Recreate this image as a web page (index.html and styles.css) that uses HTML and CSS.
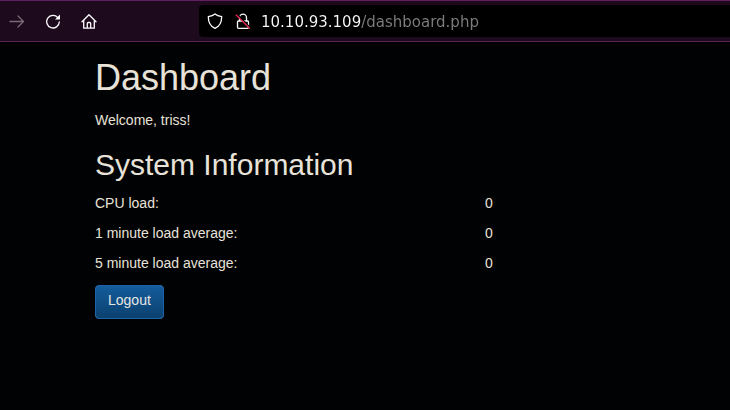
FILE: index.html
```html
<!DOCTYPE html>
<html lang="en">

<head>
    <meta charset="UTF-8">
    <meta name="viewport" content="width=device-width, initial-scale=1.0">
    <title>Dashboard</title>
    <link rel="stylesheet" href="styles.css">
</head>

<body>
    <!-- browser toolbar -->
    <header class="toolbar">
        <button type="button" class="tool forward" aria-label="Forward" disabled>
            <svg width="16" height="16" viewBox="0 0 16 16"><path d="M1 8.5h13.500M9 3l5.500 5.500L9 14"/></svg>
        </button>
        <button type="button" class="tool" aria-label="Reload">
            <svg width="16" height="16" viewBox="0 0 16 16"><path d="M12.800 4.600A6.300 6.300 0 1 0 14.300 9"/><path class="solid" d="M15 1.500v5H10z"/></svg>
        </button>
        <button type="button" class="tool" aria-label="Home">
            <svg width="16" height="16" viewBox="0 0 16 16"><path d="M1 8.800L8 1.700l7 7.100M2.700 7.300v7.900h10.600V7.300M6.300 15v-4.500q0-1 1-1h1.400q1 0 1 1V15"/></svg>
        </button>
        <div class="urlbar">
            <svg width="16" height="16" viewBox="0 0 16 16"><path d="M8 1C6.300 2.400 4 3.200 1.300 3.700c0 5.300 1.400 9.300 6.700 11.600 5.300-2.300 6.700-6.300 6.700-11.600C12 3.200 9.700 2.400 8 1z"/></svg>
            <svg width="16" height="16" viewBox="0 0 16 16"><path d="M4.500 8V4.700a3.500 3.500 0 0 1 7 0V8M3.500 8h9q1 0 1 1v5.300q0 1-1 1h-9q-1 0-1-1V9q0-1 1-1z"/><path class="gap" d="M2.500 1.800l13 13"/><path class="slash" d="M1.200 2l13.300 13.300"/></svg>
            <input type="text" class="url" aria-label="Address" value="10.10.93.109/dashboard.php">
        </div>
    </header>

    <!-- page -->
    <main class="container">
        <h1>Dashboard</h1>
        <p>Welcome, triss!</p>
        <h2>System Information</h2>
        <dl class="stats">
            <dt>CPU load:</dt>
            <dd>0</dd>
            <dt>1 minute load average:</dt>
            <dd>0</dd>
            <dt>5 minute load average:</dt>
            <dd>0</dd>
        </dl>
        <button type="button" class="btn">Logout</button>
    </main>
</body>

</html>
```
FILE: styles.css
```css
* {
    box-sizing: border-box;
}

body {
    margin: 0;
    background-color: #010204;
    color: #e8e3d9;
    font-family: "Liberation Sans", Arial, sans-serif;
    font-size: 14px;
    line-height: 20px;
}

/* toolbar */
.toolbar {
    display: flex;
    align-items: center;
    gap: 20px;
    padding: 4px 0 4px 9px;
    border-top: 1px solid #632060;
    border-bottom: 1px solid #5a2358;
    background-color: #1e0a1d;
}

.tool {
    display: flex;
    padding: 0;
    border: none;
    background: none;
    color: #fbfbfe;
}

.forward {
    color: #786a78;
}

svg {
    flex: none;
    fill: none;
    stroke: currentColor;
    stroke-width: 1.3;
    stroke-linejoin: round;
    stroke-linecap: round;
}

.solid {
    fill: currentColor;
    stroke: none;
}

.gap {
    stroke: #000;
}

.slash {
    stroke: #e22850;
}

.urlbar {
    display: flex;
    flex: 1;
    align-items: center;
    gap: 12px;
    height: 32px;
    margin-left: 82px;
    padding-left: 8px;
    border-radius: 4px 0 0 4px;
    background-color: #000;
    color: #fbfbfe;
}

/* host is bright, path is dimmed */
.url {
    flex: 1;
    min-width: 0;
    height: 24px;
    margin-left: -2px;
    padding: 2px 0 0;
    border: none;
    outline: none;
    background: linear-gradient(to right, #fbfbfe 100px, #7d7d7f 100px);
    -webkit-background-clip: text;
    background-clip: text;
    color: transparent;
    font-family: "DejaVu Sans", sans-serif;
    font-size: 15px;
}

/* page */
.container {
    padding: 16px 15px 16px 95px;
}

h1,
h2 {
    margin: 0 0 12px;
    font-weight: 500;
}

h1 {
    font-size: 36px;
    line-height: 40px;
}

h2 {
    margin-top: 18px;
    font-size: 30px;
    line-height: 33px;
}

p {
    margin: 0 0 10px;
}

.stats {
    display: grid;
    grid-template-columns: 390px 1fr;
    row-gap: 10px;
    margin: 0 0 12px;
}

.stats dd {
    margin: 0;
}

.btn {
    padding: 4px 12px 8px;
    border: 1px solid #1b62a8;
    border-radius: 4px;
    background-image: linear-gradient(to bottom, #145c9c, #0b416e);
    color: #e8e6e3;
    font-family: inherit;
    font-size: 14px;
    line-height: 20px;
    cursor: pointer;
}
```
